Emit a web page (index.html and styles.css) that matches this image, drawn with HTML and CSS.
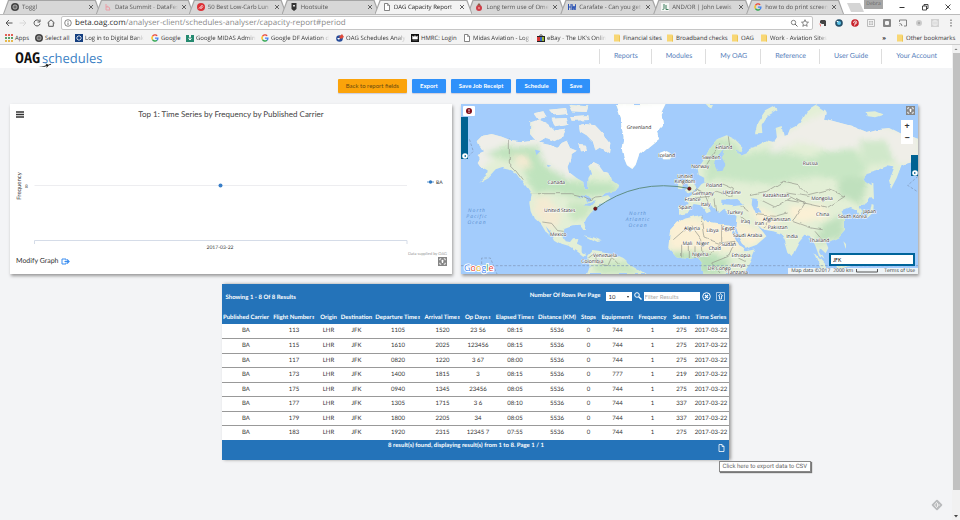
FILE: index.html
```html
<!DOCTYPE html>
<html lang="en">
<head>
<meta charset="utf-8">
<title>OAG Capacity Report</title>
<link rel="stylesheet" href="styles.css">
</head>
<body>
<svg class="defs" width="0" height="0" aria-hidden="true">
  <symbol id="file" viewBox="0 0 8 8"><path d="M1.5.5h3.2l1.8 1.8v5.2h-5z" fill="#fff" stroke="#666" stroke-width=".8"/><path d="M4.5.5v2h2" fill="none" stroke="#666" stroke-width=".6"/></symbol>
  <symbol id="folder" viewBox="0 0 8 8"><path d="M1 .5h5.5v1H7v6H1z" fill="#f8d775"/><path d="M6 1.5h1v6H6z" fill="#ecc554"/></symbol>
  <symbol id="oag" viewBox="0 0 8 8"><circle cx="4" cy="4" r="4" fill="#444"/><circle cx="4" cy="4" r="2" fill="none" stroke="#ccc" stroke-width=".8"/><path d="M4 2v4M2.6 4h2.8" stroke="#999" stroke-width=".5"/></symbol>
  <symbol id="google" viewBox="0 0 8 8"><g fill="none" stroke-width="1.3"><path d="M1.5 2.4A3 3 0 0 1 6.2 1.8" stroke="#ea4335"/><path d="M1.5 2.4a3 3 0 0 0 0 3.2" stroke="#fbbc05"/><path d="M1.5 5.6a3 3 0 0 0 4.5.7" stroke="#34a853"/><path d="M4 4.2h2.9a3 3 0 0 1-.9 2.1" stroke="#4285f4"/></g></symbol>
  <symbol id="close" viewBox="0 0 6 6"><path d="M1 1l4 4M5 1L1 5" stroke="#555" stroke-width=".9"/></symbol>
  <symbol id="expand" viewBox="0 0 10 10"><path d="M2 3.6V2h1.6M6.4 2H8v1.6M8 6.4V8H6.4M3.6 8H2V6.4" fill="none" stroke="currentColor"/><path d="M5 2.8l1.8 2H5.7v1.8H4.3V4.800H3.2z" fill="currentColor"/></symbol>
</svg>

<div class="tabs">
  <div class="tab"><svg class="ico"><use href="#oag"/></svg><span>Toggl</span><button aria-label="Close tab"><svg><use href="#close"/></svg></button></div>
  <div class="tab"><svg class="ico" viewBox="0 0 8 8"><path d="M2 1v3l2-1M2 4v3h4L5 4z" fill="none" stroke="#e9a0a8"/></svg><span>Data Summit - DataFes</span><button aria-label="Close tab"><svg><use href="#close"/></svg></button></div>
  <div class="tab"><svg class="ico" viewBox="0 0 8 8"><circle cx="4" cy="4" r="4" fill="#dc3237"/><path d="M2 5.5L5.5 2M3.5 6L6 3.5" stroke="#fff"/></svg><span>50 Best Low-Carb Lun</span><button aria-label="Close tab"><svg><use href="#close"/></svg></button></div>
  <div class="tab"><svg class="ico" viewBox="0 0 8 8"><path d="M1.5 0h5v6L4 8 1.500 6z" fill="#333"/><path d="M3 2h2v1.500H3z" fill="#ddd"/></svg><span>Hootsuite</span><button aria-label="Close tab"><svg><use href="#close"/></svg></button></div>
  <div class="tab active"><svg class="ico"><use href="#file"/></svg><span>OAG Capacity Report</span><button aria-label="Close tab"><svg><use href="#close"/></svg></button></div>
  <div class="tab"><svg class="ico" viewBox="0 0 8 8"><circle cx="4" cy="5" r="3" fill="#cf3d48"/><path d="M2 2.500h4L4 0z" fill="#8b5a45"/><path d="M3 4h2v2H3z" fill="#e98080"/></svg><span>Long term use of Ome</span><button aria-label="Close tab"><svg><use href="#close"/></svg></button></div>
  <div class="tab"><svg class="ico" viewBox="0 0 8 8"><path d="M.5 1v6M3 1v6M.5 4H3M4 1l.8 6L6 3l1 4 .8-6" fill="none" stroke="#2a52b4"/></svg><span>Carafate - Can you get</span><button aria-label="Close tab"><svg><use href="#close"/></svg></button></div>
  <div class="tab"><svg class="ico" viewBox="0 0 8 8"><path d="M0 0h8v8H0z" fill="#f4f6f4"/><path d="M3 1v4.500q0 1-1.500 1M5 2v4.500h2.500" fill="none" stroke="#3d7c5c"/></svg><span>AND/OR | John Lewis</span><button aria-label="Close tab"><svg><use href="#close"/></svg></button></div>
  <div class="tab"><svg class="ico"><use href="#google"/></svg><span>how to do print screen</span><button aria-label="Close tab"><svg><use href="#close"/></svg></button></div>
  <button class="newtab" aria-label="New tab"></button>
  <div class="window">
    <span class="user">Debra</span>
    <button aria-label="Minimise"><svg viewBox="0 0 8 8"><path d="M1.500 4.500h5" stroke="#333"/></svg></button>
    <button aria-label="Restore"><svg viewBox="0 0 8 8"><path d="M1.500 3h4v4h-4zM3 3V1.500h4v4H5.500" fill="none" stroke="#333" stroke-width=".9"/></svg></button>
    <button aria-label="Close"><svg viewBox="0 0 8 8"><path d="M1.500 1.500l5 5M6.500 1.500l-5 5" stroke="#333" stroke-width=".9"/></svg></button>
  </div>
</div>

<div class="toolbar">
  <button aria-label="Back"><svg viewBox="0 0 8 8"><path d="M7.500 4H1M4 1L1 4l3 3" fill="none" stroke="#555"/></svg></button>
  <button aria-label="Forward"><svg viewBox="0 0 8 8"><path d="M.5 4H7M4 1l3 3-3 3" fill="none" stroke="#d8d8d8"/></svg></button>
  <button aria-label="Reload"><svg viewBox="0 0 8 8"><path d="M6.500 2.200A3 3 0 1 0 7 4.700M7 .5v2.500H4.500" fill="none" stroke="#555"/></svg></button>
  <button aria-label="Home"><svg viewBox="0 0 8 8"><path d="M.5 4L4 .8 7.500 4M1.700 3.500v3.800h4.600V3.500" fill="none" stroke="#555"/></svg></button>
  <div class="address"><svg class="ico" viewBox="0 0 8 8"><circle cx="4" cy="4" r="3.300" fill="none" stroke="#555" stroke-width=".7"/><path d="M4 3.500V6M4 2v.8" stroke="#555" stroke-width=".8"/></svg>
    <span class="url">beta.oag.com<i>/analyser-client/schedules-analyser/capacity-report#period</i></span>
    <svg class="ico" viewBox="0 0 8 8"><circle cx="3.500" cy="3.500" r="2.200" fill="none" stroke="#666" stroke-width=".8"/><path d="M5 5l2.500 2.500" stroke="#666"/></svg>
    <svg class="ico" viewBox="0 0 8 8"><path d="M4 .7l1 2.300 2.500.2-1.900 1.700.6 2.400L4 6 1.800 7.300l.6-2.400L.5 3.200 3 3z" fill="none" stroke="#555" stroke-width=".7"/></svg>
  </div>
  <div class="exts">
    <svg viewBox="0 0 8 8"><path d="M1 2l1-1h4l1 1v5H5V5H3L1 4z" fill="#444"/><path d="M0 4l2 2v2z" fill="#e44"/></svg>
    <svg viewBox="0 0 8 8"><circle cx="4" cy="4" r="3.800" fill="#24506a"/><circle cx="4" cy="4" r="2" fill="#5cc3e8"/><path d="M1.500 2l2 1" stroke="#fff"/></svg>
    <svg viewBox="0 0 8 8"><circle cx="4" cy="4" r="3.800" fill="#c8232c"/><path d="M3.500 6.500L4.500 3M2.500 4q0-2 1.700-2t1.500 1.500-1.500 1.500" fill="none" stroke="#fff" stroke-width=".8"/></svg>
    <svg viewBox="0 0 8 8"><path d="M.5.5h7v7h-7zM2 2l4 4M6 2L2 6" fill="none" stroke="#bbb"/><circle cx="4" cy="4" r="1.500" fill="#eee" stroke="#aaa" stroke-width=".6"/></svg>
    <svg viewBox="0 0 8 8"><rect width="8" height="8" rx="1" fill="#858585"/><rect x="2" y="2" width="4" height="4" rx="1" fill="#f4f4f4"/></svg>
    <svg viewBox="0 0 8 8"><path d="M.5 3V1h7v6H5M.5 4.500A2.500 2.500 0 0 1 3 7M.5 6.500l.5.5" fill="none" stroke="#777" stroke-width=".9"/></svg>
    <svg viewBox="0 0 8 8"><circle cx="4" cy="4" r="3" fill="#ccc"/><circle cx="4" cy="4" r="1.200" fill="#aaa"/></svg>
    <svg viewBox="0 0 8 8"><rect width="8" height="8" fill="#d2d2d2"/><path d="M2 2h4v4H2zM4 1v6" fill="none" stroke="#eee"/></svg>
    <svg viewBox="0 0 8 8"><path d="M3.500 .5h1v1.500h-1zM3.500 3.200h1v1.500h-1zM3.500 6h1v1.500h-1z" fill="#555"/></svg>
  </div>
</div>

<nav class="bookmarks" aria-label="Bookmarks">
  <a href="#"><svg class="ico" viewBox="0 0 8 8"><g stroke-width="2" stroke-dasharray="2 1"><path d="M0 1h8" stroke="#e06055"/><path d="M0 4h8" stroke="#5aa06a"/><path d="M0 7h8" stroke="#e6b84c"/></g></svg>Apps</a>
  <a href="#"><svg class="ico"><use href="#oag"/></svg>Select all</a>
  <a href="#"><svg class="ico" viewBox="0 0 8 8"><rect width="8" height="8" fill="#153f80"/><path d="M4 1v6M1 4h6M2 2l4 4M6 2L2 6" stroke="#fff" stroke-width=".8"/><circle cx="4" cy="4" r="1.300" fill="#153f80"/></svg><span>Log in to Digital Bank</span></a>
  <a href="#"><svg class="ico"><use href="#google"/></svg>Google</a>
  <a href="#"><svg class="ico" viewBox="0 0 8 8"><path d="M0 1h3v2h2V1h3v7H0z" fill="#258a70"/><path d="M4 2v4M2.500 4.500L4 6l1.500-1.500" fill="none" stroke="#fff"/></svg><span>Google MIDAS Admin</span></a>
  <a href="#"><svg class="ico"><use href="#google"/></svg><span>Google DF Aviation d</span></a>
  <a href="#"><svg class="ico" viewBox="0 0 8 8"><circle cx="3.500" cy="4.500" r="3.300" fill="#284e9b"/><path d="M3 3l3-3 2 3-3 2z" fill="#e04a3a"/><path d="M1 4l2 2 1-2z" fill="#fff"/></svg><span>OAG Schedules Analy</span></a>
  <a href="#"><svg class="ico" viewBox="0 0 8 8"><rect width="8" height="8" fill="#111"/><path d="M1.500 2l1.500 1 1-1.500L5 3l1.500-1v3h-5zM1.500 6h5" fill="#fff" stroke="#fff" stroke-width=".4"/></svg>HMRC: Login</a>
  <a href="#"><svg class="ico"><use href="#file"/></svg><span>Midas Aviation - Log i</span></a>
  <a href="#"><svg class="ico" viewBox="0 0 8 8"><path d="M0 2h8v6H0z" fill="#222"/><path d="M0 3h3v4H0z" fill="#d93636"/><path d="M3 3h2v4H3z" fill="#3366c5"/><path d="M5 3h2v4H5z" fill="#9ab934"/><path d="M2.500 2q1.500-3 3 0" fill="none" stroke="#333"/></svg><span>eBay - The UK's Onlin</span></a>
  <a href="#"><svg class="ico"><use href="#folder"/></svg>Financial sites</a>
  <a href="#"><svg class="ico"><use href="#folder"/></svg>Broadband checks</a>
  <a href="#"><svg class="ico"><use href="#folder"/></svg>OAG</a>
  <a href="#"><svg class="ico"><use href="#folder"/></svg><span>Work - Aviation Sites</span></a>
  <b>»</b>
  <a href="#"><svg class="ico"><use href="#folder"/></svg>Other bookmarks</a>
</nav>

<div class="viewport">
<div class="page">
  <header>
    <a class="logo" href="#"><b>OAG</b><span>schedules</span>
      <svg viewBox="0 0 16 6"><path d="M0 4Q6 5 10 2.500L8.500.8h1.200L12 2l3-1 .5.700-3.200 1.300-2 2.500H9.500l.8-2Q5 5.500 0 4z" fill="#111"/></svg></a>
    <nav aria-label="Main"><a href="#">Reports</a><a href="#">Modules</a><a href="#">My OAG</a><a href="#">Reference</a><a href="#">User Guide</a><a href="#">Your Account</a></nav>
  </header>
  <main>
    <div class="actions">
      <button class="back">Back to report fields</button><button>Export</button><button>Save Job Receipt</button><button>Schedule</button><button>Save</button>
    </div>
    <div class="cards">
      <section class="card chart">
        <div class="chart-head"><button aria-label="Chart menu"><svg viewBox="0 0 8 7"><path d="M0 1h8M0 3.500h8M0 6h8" stroke="#333" stroke-width="1.400"/></svg></button><h2>Top 1: Time Series by Frequency by Published Carrier</h2></div>
        <svg class="plot" viewBox="0 0 442 124">
          <path d="M24.500 61.500H397" stroke="#ededf0"/><path d="M24.500 120v-3.500H397v3.500" fill="none" stroke="#d5dce8"/>
          <circle cx="210.500" cy="61.500" r="2" fill="#3a7fc8"/>
          <text x="11" y="62" transform="rotate(-90 11 62)" text-anchor="middle">Frequency</text>
          <text x="15" y="64" class="tiny">8</text>
          <text x="210" y="125" text-anchor="middle" class="tiny">2017-03-22</text>
          <path d="M417 58h7" stroke="#5f97cf"/><circle cx="420.500" cy="58" r="1.700" fill="#2f78c0"/>
          <text x="426" y="60" class="tiny">BA</text>
        </svg>
        <div class="chart-foot"><a href="#">Modify Graph <svg viewBox="0 0 9 7"><path d="M5 1H1v5h4M5 1v1.500M5 6V4.500" fill="none" stroke="#3a8df0"/><path d="M3.500 3.500h4M6 1.500l2 2-2 2" fill="none" stroke="#3a8df0" stroke-width="1.200"/></svg></a>
          <div class="credit"><small>Data supplied by OAG</small><button class="expand" aria-label="Expand chart"><svg><use href="#expand"/></svg></button></div></div>
      </section>
      <section class="card map">
        <svg class="world" viewBox="18 18 1371 510" preserveAspectRatio="xMidYMid slice" role="img" aria-label="Route map">
          <defs>
            <clipPath id="land"><use href="#ground"/></clipPath>
            <filter id="soft" x="-20%" y="-20%" width="140%" height="140%"><feGaussianBlur stdDeviation="9"/></filter>
            <filter id="rough" x="0" y="0" width="100%" height="100%"><feTurbulence type="fractalNoise" baseFrequency=".025" numOctaves="3" seed="4"/><feDisplacementMap in="SourceGraphic" scale="12" xChannelSelector="R" yChannelSelector="G"/></filter>
            <path id="ground" d="M65 130L80 115 110 108 140 116 163 125 200 130 235 125 260 135 290 142 310 150 320 135 335 128 345 150 365 158 350 168 348 185 340 205 345 225 365 240 385 252 390 272 400 270 400 240 408 228 400 205 415 192 432 200 445 218 460 225 468 245 490 262 485 278 455 285 436 298 462 292 470 300 450 314 432 318 418 334 405 347 395 360 388 375 393 396 385 396 376 383 350 385 328 393 325 412 332 430 345 432 354 421 370 420 366 437 380 444 380 460 394 468 388 474 366 457 345 445 320 437 300 425 290 405 272 384 284 412 276 408 258 378 240 362 230 340 226 315 230 290 220 274 208 258 195 240 185 225 165 212 142 207 122 214 100 238 70 254 94 232 98 220 78 210 68 195 78 180 68 168 88 160 74 150Z
              M226 70L250 64 278 78 300 100 330 95 320 120 300 130 275 120 250 136 240 125 225 108Z M240 45L265 40 275 58 252 62Z M285 35L330 30 335 48 300 52Z M340 20L400 25 395 42 350 40Z M290 62L335 60 340 80 300 88Z M345 55L400 52 402 66 350 68Z M372 82L390 78 420 82 445 108 466 135 462 166 440 150 425 160 418 135 395 112 375 100Z M370 138L392 140 396 158 375 160Z
              M480 18L495 60 500 90 506 120 500 150 506 178 516 202 532 213 542 200 552 170 578 148 612 120 606 100 624 80 620 50 636 18Z
              M614 168L635 160 656 170 648 184 625 184Z M690 238L705 232 712 250 722 275 700 284 690 278 700 262Z M670 256L684 254 682 274 668 272Z
              M396 474L412 456 440 460 470 466 502 480 520 496 545 510 572 528H396L404 508Z M385 412L412 418 440 430 425 432 405 422Z
              M645 400L668 374 690 362 735 350 757 372 790 376 830 382 840 400 855 440 872 460 902 454 885 492 862 528H745L740 490 730 478 700 484 664 478 640 450Z
              M748 242L732 234 728 212 744 190 766 148 786 124 815 112 840 124 862 146 856 160 838 154 858 170 878 162 888 150 910 144 935 130 955 135 966 118 962 90 980 84 986 112 998 108 1005 90 1035 75 1055 40 1085 22 1115 42 1110 62 1145 72 1190 84 1235 102 1265 94 1305 90 1345 110 1389 125V180L1365 194 1340 200 1325 240 1308 273 1302 250 1318 208 1295 205 1265 217 1235 225 1222 246 1250 265 1252 292 1235 312 1210 325 1220 345 1213 358 1202 338 1184 330 1160 340 1170 368 1170 395 1150 418 1126 430 1111 428 1120 450 1112 466 1095 450 1092 462 1106 485 1092 474 1080 440 1064 414 1048 410 1032 430 1020 452 1010 474 1000 464 990 430 980 408 955 400 928 395 908 378 920 397 934 415 905 440 872 452 855 420 842 385 845 350 820 348 805 335 792 345 768 318 758 326 768 340 755 346 738 322 716 318 700 345 672 350 672 326 698 322 692 302 718 284 736 262 748 255Z
              M900 106L908 72 930 40 960 24 968 34 938 52 920 80 922 105Z M1232 42L1260 40 1285 50 1260 58 1235 54Z M1238 352L1246 340 1250 318 1256 320 1255 342 1240 358 1225 362Z M1250 256L1255 258 1257 304 1250 300Z M1165 430L1175 440 1172 452Z M1075 462L1110 500 1120 528H1105Z M1145 490L1180 475 1185 505 1150 515Z M755 18L774 18 768 30Z"/>
          </defs>
          <rect x="0" width="1410" height="540" fill="#a3ccfc"/>
          <g filter="url(#rough)">
            <use href="#ground" fill="#e3efd6"/>
            <g clip-path="url(#land)"><g filter="url(#soft)">
              <path d="M60 100H160L260 125 380 70 480 90 470 230 400 200 340 250 260 190 150 130 110 190 60 230ZM220 20H460V160H230Z" fill="#efeee9"/>
              <path d="M475 10H650V220H475Z" fill="#fff"/>
              <path d="M90 165L160 145 250 145 270 205 350 250 480 255 490 285 380 300 280 280 240 290 200 200Z" fill="#bfe3bd"/>
              <path d="M240 300L280 295 320 360 290 400 240 350ZM165 170L220 175 230 210 190 205Z" fill="#f4ead2"/>
              <path d="M340 310L420 315 395 360 350 370ZM410 490L520 490 560 528H420Z" fill="#c9e6c1"/>
              <path d="M750 120L830 125 870 170 960 150 1060 180 1180 130 1240 210 1190 250 1080 235 940 260 780 240 750 260Z" fill="#c8e6c4"/>
              <path d="M950 120L1110 40 1389 110V200L1270 190 1200 150 1120 160 1040 130 950 170Z" fill="#efeee8"/>
              <path d="M1150 245L1240 230 1220 320 1150 290ZM1100 380L1170 350 1165 415 1080 440Z" fill="#bfe0bd"/>
              <path d="M640 355L850 370 870 460 640 455ZM850 370L940 410 880 450ZM870 320L950 345 980 390 920 390ZM1000 325L1100 320 1125 355 1040 375 1000 360Z" fill="#fbf0d5"/>
              <path d="M650 462L760 465 830 490 800 528H730V485L650 490Z" fill="#b9dfb8"/>
              <path d="M1210 130l80-5 30 70-90 5z" fill="#d0e8ca"/>
            </g></g>
            <g fill="#a3ccfc"><path d="M790 220l-10-22 8-24 18-22-5 28 10 18-8 20zM802 305l45-2 20 18-35 4-30-4zM892 298l18 2-2 25 12 22-18-2-12-28zM365 292l28 2 14 12-10 8-6-14-15-2zM386 322l24-10 10-2-14 14zM240 155l16 4-12 12zM275 200l14 3-10 4zM835 395l24 48 14 12-20-10-22-40z"/></g>
            <g fill="none" stroke="#92948a" stroke-width="2"><path d="M163 122V195L182 215 205 245M230 287H350L372 292 405 308 418 300 440 298M262 372L290 376 308 398 326 400M400 480l20-15 5 30 35 5 10-22 20 20M885 290l50-10 50-30 45 10 30 30 60-15 50 20-55 35-70-15-35-18-50 30-40-20M990 305l60 10-35 55 55 20 30 5M900 350l60 5 35-10M860 360l25 20M710 385l30 40 5 50M740 350l10 70 40 15 50-5M800 375v60l-40 40M840 430l-20 45-50 20 25 30M655 425l40-35M820 115l5 40M755 200l40-65M760 265l40-10 35 15-5 25-45-15-25 20M720 275l30 15 10 25M720 300l45-5M780 300l5 40M860 325l20 15M850 480l20 10M680 440v38M700 440v40M720 445v35M1060 295l-65-10M1080 400l25 30M925 390l20-30 50 5"/></g>
          </g>
          <g fill="none" stroke="#7d94b5" stroke-width="2" stroke-dasharray="8 5"><path d="M18 503H1389M80 498V480H106L126 528M30 185L55 160 42 120M1389 235L1358 262 1389 282"/></g>
          <path d="M421 332Q545 240 702 271" fill="none" stroke="#5f8e83" stroke-width="3"/>
          <g fill="#7b1018" stroke="#3b1a1a" stroke-width="2"><circle cx="421" cy="332" r="5"/><circle cx="703" cy="272" r="5"/></g>
          <g class="places"><text x="552" y="94">Greenland</text><text x="635" y="178">Iceland</text><text x="304" y="258">Canada</text><text x="314" y="343">United States</text><text x="310" y="415">Mexico</text><text x="450" y="477">Venezuela</text><text x="412" y="495">Colombia</text><text x="690" y="239">United</text><text x="690" y="256">Kingdom</text><text x="713" y="308">France</text><text x="691" y="333">Spain</text><text x="711" y="397">Algeria</text><text x="697" y="440">Mali</text><text x="806" y="153">Finland</text><text x="769" y="182">Sweden</text><text x="736" y="211">Norway</text><text x="777" y="268">Poland</text><text x="744" y="290">Germany</text><text x="830" y="289">Ukraine</text><text x="752" y="325">Italy</text><text x="840" y="347">Turkey</text><text x="871" y="374">Iraq</text><text x="913" y="381">Iran</text><text x="965" y="369">Afghanistan</text><text x="968" y="393">Pakistan</text><text x="963" y="297">Kazakhstan</text><text x="1066" y="202">Russia</text><text x="1101" y="306">Mongolia</text><text x="1103" y="354">China</text><text x="1192" y="360">South Korea</text><text x="1244" y="346">Japan</text><text x="1011" y="419">India</text><text x="1093" y="431">Thailand</text><text x="772" y="401">Libya</text><text x="820" y="395">Egypt</text><text x="878" y="416">Saudi Arabia</text><text x="743" y="440">Niger</text><text x="779" y="455">Chad</text><text x="821" y="443">Sudan</text><text x="736" y="473">Nigeria</text><text x="858" y="476">Ethiopia</text><text x="793" y="516">DR Congo</text><text x="850" y="508">Kenya</text><text x="848" y="528">Tanzania</text></g>
          <g class="oceans"><text x="66" y="342">North</text><text x="66" y="361">Pacific</text><text x="66" y="379">Ocean</text><text x="549" y="350">North</text><text x="549" y="369">Atlantic</text><text x="549" y="387">Ocean</text></g>
        </svg>
        <div class="alert"><svg viewBox="0 0 6 6"><circle cx="3" cy="3" r="3" fill="#810c18"/><path d="M3 1.200v2.200M3 4v.8" stroke="#fff"/></svg></div>
        <button class="drawer left" aria-label="Open left panel"><svg viewBox="0 0 6 6"><circle cx="3" cy="3" r="2.800" fill="#fff"/><path d="M2 3h2M3 2l1 1-1 1" fill="none" stroke="#006292" stroke-width=".7"/></svg></button>
        <button class="drawer right" aria-label="Open right panel"><svg viewBox="0 0 6 6"><circle cx="3" cy="3" r="2.800" fill="#fff"/><path d="M4 3H2M3 2L2 3l1 1" fill="none" stroke="#006292" stroke-width=".7"/></svg></button>
        <button class="expand full" aria-label="Expand map"><svg><use href="#expand"/></svg></button>
        <div class="zoom"><button aria-label="Zoom in">+</button><button aria-label="Zoom out">−</button></div>
        <div class="google"><i>G</i><i>o</i><i>o</i><i>g</i><i>l</i><i>e</i></div>
        <input class="find" aria-label="Find airport" value="JFK">
        <div class="legal"><span>Map data ©2017</span><span>2000 km</span><svg viewBox="0 0 22 4"><path d="M.5 0v3h21V0" fill="none" stroke="#555"/></svg><a href="#">Terms of Use</a></div>
      </section>
    </div>
    <section class="results">
      <div class="bar">
        <b>Showing 1 - 8 Of 8 Results</b>
        <div class="tools"><label for="rows">Number Of Rows Per Page</label>
          <span class="pick"><select id="rows"><option>10</option></select></span>
          <svg viewBox="0 0 8 8"><circle cx="3" cy="3" r="2.300" fill="none" stroke="#fff"/><path d="M4.700 4.700L7.500 7.500" stroke="#fff" stroke-width="1.400"/></svg>
          <input aria-label="Filter results" placeholder="Filter Results">
          <button aria-label="Clear filter"><svg viewBox="0 0 9 9"><circle cx="4.500" cy="4.500" r="3.800" fill="none" stroke="#fff"/><path d="M3 3l3 3M6 3L3 6" stroke="#fff" stroke-width="1.200"/></svg></button>
          <button class="grow" aria-label="Expand table"><svg viewBox="0 0 9 9"><path d="M.5.5h8v8h-8z" fill="none" stroke="#c8dcf0" stroke-width=".8"/><path d="M4.500 1.500l2 2.500h-1v3h-2V4h-1z" fill="none" stroke="#fff" stroke-width=".8"/></svg></button>
        </div>
      </div>
      <table>
        <colgroup><col class="w49"><col class="w47"><col class="w22"><col class="w34"><col class="w49"><col class="w40"><col class="w31"><col class="w43"><col class="w41"><col class="w22"><col class="w36"><col class="w34"><col class="w24"><col class="w35"></colgroup>
        <thead><tr><th>Published Carrier</th><th class="sort">Flight Number</th><th>Origin</th><th>Destination</th><th class="sort">Departure Time</th><th class="sort">Arrival Time</th><th class="sort">Op Days</th><th class="sort">Elapsed Time</th><th>Distance (KM)</th><th>Stops</th><th class="sort">Equipment</th><th>Frequency</th><th class="sort">Seats</th><th>Time Series</th></tr></thead>
        <tbody>
          <tr><td>BA<td>113<td>LHR<td>JFK<td>1105<td>1520<td>23 56<td>08:15<td>5536<td>0<td>744<td>1<td>275<td>2017-03-22</tr>
          <tr><td>BA<td>115<td>LHR<td>JFK<td>1610<td>2025<td>123456<td>08:15<td>5536<td>0<td>744<td>1<td>275<td>2017-03-22</tr>
          <tr><td>BA<td>117<td>LHR<td>JFK<td>0820<td>1220<td>3 67<td>08:00<td>5536<td>0<td>744<td>1<td>275<td>2017-03-22</tr>
          <tr><td>BA<td>173<td>LHR<td>JFK<td>1400<td>1815<td>3<td>08:15<td>5536<td>0<td>777<td>1<td>219<td>2017-03-22</tr>
          <tr><td>BA<td>175<td>LHR<td>JFK<td>0940<td>1345<td>23456<td>08:05<td>5536<td>0<td>744<td>1<td>275<td>2017-03-22</tr>
          <tr><td>BA<td>177<td>LHR<td>JFK<td>1305<td>1715<td>3 6<td>08:10<td>5536<td>0<td>744<td>1<td>337<td>2017-03-22</tr>
          <tr><td>BA<td>179<td>LHR<td>JFK<td>1800<td>2205<td>34<td>08:05<td>5536<td>0<td>744<td>1<td>337<td>2017-03-22</tr>
          <tr><td>BA<td>183<td>LHR<td>JFK<td>1920<td>2315<td>12345 7<td>07:55<td>5536<td>0<td>744<td>1<td>275<td>2017-03-22</tr>
        </tbody>
      </table>
      <div class="summary"><b>8 result(s) found, displaying result(s) from 1 to 8. Page 1 / 1</b>
        <button aria-label="Export to CSV"><svg viewBox="0 0 7 8"><path d="M1 .5h3l2 2v5H1zM4 .5v2h2" fill="none" stroke="#fff" stroke-width=".8"/></svg></button>
        <div class="tip" role="tooltip">Click here to export data to CSV</div></div>
    </section>
  </main>
  <svg class="badge" viewBox="0 0 12 12"><rect x="2" y="2" width="8" height="8" rx="1" transform="rotate(45 6 6)" fill="#b9bbbd"/><path d="M6 3L3.500 6 6 9M6.500 4v4M8 5v2" fill="none" stroke="#eee"/></svg>
</div>
<div class="scroll"><svg viewBox="0 0 8 8"><path d="M2.500 5L4 3.500 5.500 5z" fill="#777"/></svg><div></div><svg class="down" viewBox="0 0 8 8"><path d="M2 3h4L4 5.500z" fill="#444"/></svg></div>
</div>
</body>
</html>
```
FILE: styles.css
```css
* { box-sizing: border-box; }
body { margin: 0; min-height: 100vh; display: flex; flex-direction: column; background: #f3f4f6; font: 6px/10px "Open Sans", sans-serif; color: #333; text-rendering: geometricPrecision; }
button { border: 0; padding: 0; background: none; font: inherit; color: inherit; display: flex; align-items: center; justify-content: center; }
a { color: inherit; text-decoration: none; }
svg { display: block; flex: none; }
.defs { position: absolute; }
.ico { width: 8px; height: 8px; }

.tabs { display: flex; height: 15px; padding-left: 3px; background: #fff; border-bottom: 1px solid #bbb; }
.tab { flex: 0 1 98px; min-width: 0; margin-right: -5px; display: flex; align-items: center; gap: 3px; padding: 0 7px 0 8px; background: #a5a5a5; clip-path: polygon(5px 0, calc(100% - 5px) 0, 100% 100%, 0 100%); position: relative; color: #555; }
.tab::before { content: ""; position: absolute; inset: 0; background: #d7d7d7; clip-path: polygon(6px 1px, calc(100% - 6px) 1px, calc(100% - 1px) 100%, 1px 100%); }
.tab.active::before { background: #f3f3f3; }
.tab.active { z-index: 1; color: #222; }
.tab > * { position: relative; }
.tab span { flex: 1; overflow: hidden; white-space: nowrap; mask-image: linear-gradient(to right, #000 88%, transparent); }
.tab button svg { width: 6px; height: 6px; }
.newtab { flex: none; width: 17px; height: 9px; margin: 3px 0 0 8px; background: #d5d5d5; clip-path: polygon(0 0, 13px 0, 100% 100%, 4px 100%); }
.window { margin-left: auto; display: flex; align-items: center; gap: 15px; padding-right: 8px; }
.user { align-self: flex-start; width: 19px; height: 9px; font-size: 5px; line-height: 8px; text-align: center; background: #a6a6a6; color: #666; }
.window svg { width: 8px; height: 8px; }

.toolbar { display: flex; align-items: center; height: 16px; padding: 0 5px 0 5px; background: #f3f3f3; gap: 6px; }
.toolbar button svg { width: 8px; height: 8px; }
.address { flex: 1; display: flex; align-items: center; gap: 3px; height: 14px; padding: 0 3px 0 2px; background: #fff; border: 1px solid #c6c6c6; border-radius: 2px; }
.url { flex: 1; font-size: 8px; color: #333; white-space: nowrap; }
.url i { font-style: normal; color: #8a8a8a; }
.exts { display: flex; gap: 8px; }
.exts svg { width: 8px; height: 8px; }

.bookmarks { display: grid; grid-template-columns: 30px 40px 76px 35px 75px 75px 75px 52px 74px 76px 53px 65px 29px 76px 1fr 64px; align-items: center; height: 14px; padding-left: 5px; background: #f3f3f3; border-bottom: 1px solid #ccc; white-space: nowrap; }
.bookmarks a { display: flex; align-items: center; gap: 2px; min-width: 0; padding-right: 2px; }
.bookmarks span { overflow: hidden; mask-image: linear-gradient(to right, #000 85%, transparent); }
.bookmarks b { justify-self: end; padding-right: 10px; }

.viewport { flex: 1; display: flex; }
.page { flex: 1; min-width: 0; position: relative; }
.scroll { width: 8px; display: flex; flex-direction: column; background: #f1f1f1; }
.scroll div { flex: 1; margin: 0 0 22px 1px; background: #c1c1c1; }
.scroll svg { height: 8px; }

header { display: flex; justify-content: space-between; align-items: center; height: 23px; background: #fff; }
.logo { position: relative; display: flex; align-items: center; gap: 2px; padding: 3px 0 0 15px; font: 13px/20px "Open Sans", sans-serif; color: #3b7fc4; }
.logo b { font: 700 15px/20px "Liberation Sans Narrow", "Open Sans Condensed", sans-serif; color: #111; }
.logo svg { position: absolute; left: 38px; bottom: 0; width: 14px; height: 5px; }
header nav { display: flex; }
header nav a { padding: 0 13px 0 14px; border-left: 1px solid #ddd; font: 7px/15px Lato, sans-serif; color: #5780bb; }
header nav a:last-child { padding-right: 15px; }

main { padding: 11px 34px 0 10px; font-family: Lato, sans-serif; }
.actions { display: flex; justify-content: center; gap: 5px; }
.actions button { height: 14px; padding: 0 8px; border-radius: 1px; background: #2f91fa; color: #fff; font-weight: 700; box-shadow: 0 1px 1px #ccd; }
.actions .back { background: #fba30a; color: #6b4a10; font-weight: 400; }
.cards { display: grid; grid-template-columns: 442fr 457fr; gap: 9px; margin-top: 11px; }
.card { position: relative; min-width: 0; height: 170px; background: #fff; box-shadow: 1px 2px 3px #999; }
.chart { display: flex; flex-direction: column; }
.chart-head { display: flex; align-items: center; height: 20px; padding: 0 14px 0 6px; }
.chart-head svg { width: 8px; height: 7px; }
h2 { flex: 1; margin: 0; text-align: center; font: 400 8px/12px Lato, sans-serif; color: #444; }
.plot { width: 100%; flex: 1; min-height: 0; overflow: visible; }
.plot text { font: 6px Lato, sans-serif; fill: #333; }
.plot .tiny { font-size: 5px; }
.chart-foot { display: flex; justify-content: space-between; align-items: flex-end; padding: 0 5px 8px 6px; height: 26px; font-size: 7px; }
.chart-foot a { display: flex; align-items: center; gap: 2px; }
.chart-foot a svg { width: 9px; height: 7px; }
.credit { display: flex; flex-direction: column; align-items: flex-end; }
.credit small { font-size: 4px; line-height: 6px; color: #999; }
.expand { width: 9px; height: 9px; background: #858585; color: #fff; }
.expand svg { width: 9px; height: 9px; }

.world { width: 100%; height: 100%; }
.places text { font: 15px "Open Sans", sans-serif; text-anchor: middle; fill: #222; stroke: #fff; stroke-width: 3px; paint-order: stroke; }
.oceans text { font: italic 15px "Open Sans", sans-serif; letter-spacing: 3px; text-anchor: middle; fill: #5b8fd0; }
.alert { position: absolute; top: 2px; left: 2px; padding: 2px 3px; background: #fff; border-radius: 1px; }
.alert svg { width: 6px; height: 6px; }
.drawer { position: absolute; width: 7px; background: #006292; align-items: flex-end; }
.drawer svg { width: 6px; height: 6px; }
.drawer.left { left: 0; top: 13px; height: 42px; }
.drawer.right { right: 0; top: 51px; height: 21px; }
.full { position: absolute; top: 2px; right: 3px; }
.zoom { position: absolute; top: 16px; right: 5px; width: 12px; background: #fff; font: 700 9px/12px "Open Sans", sans-serif; }
.zoom button { width: 12px; height: 12px; }
.google { position: absolute; left: 3px; bottom: 1px; font: 9px/11px "Open Sans", sans-serif; -webkit-text-stroke: 2px #fff; paint-order: stroke; }
.google i { font-style: normal; color: #4285f4; }
.google i:nth-child(2), .google i:nth-child(6) { color: #ea4335; }
.google i:nth-child(3) { color: #e8ae16; }
.google i:nth-child(5) { color: #34a853; }
.find { position: absolute; right: 3px; bottom: 8px; width: 86px; height: 13px; padding: 0 3px; border: 1px solid #00649a; outline: 1px solid #00649a; outline-offset: -2px; background: #fff; font: 5px Lato, sans-serif; }
.legal { position: absolute; right: 0; bottom: 0; display: flex; align-items: center; gap: 3px; height: 6px; padding: 0 3px; background: #eef3f6; font: 5px/6px "Open Sans", sans-serif; white-space: nowrap; }
.legal svg { width: 22px; height: 4px; }
.legal a { margin-left: 3px; }

.results { position: relative; width: 507px; max-width: 100%; margin: 10px auto 0; left: 11px; background: #2473b9; color: #fff; box-shadow: 2px 0 3px #999; line-height: 8px; }
.bar { display: flex; justify-content: space-between; height: 27px; padding: 8px 4px 0; }
.bar > b { padding-top: 2px; }
.tools { display: flex; align-items: flex-start; gap: 2px; }
.tools label { font-weight: 700; padding-right: 3px; }
.tools > svg { width: 8px; height: 8px; }
.tools button svg { width: 9px; height: 9px; }
.grow { margin-left: 3px; }
.pick { position: relative; background: #fff; }
.pick::after { content: ""; position: absolute; right: 3px; top: 4px; border: 1px solid transparent; border-top: 2px solid #222; }
select { display: block; width: 26px; height: 9px; padding: 0 3px; border: 0; appearance: none; background: transparent; font: 6px/9px Lato, sans-serif; color: #333; }
.tools input { width: 56px; height: 9px; padding: 0 1px; border: 0; font: 6px Lato, sans-serif; background: #fff; }
.tools input::placeholder { color: #aaa; }
table { width: 100%; table-layout: fixed; border-collapse: collapse; text-align: center; white-space: nowrap; }
th, td { padding: 1px 0 0; }
th { height: 13px; }
.sort::after { content: "⇕"; font-size: 4px; }
td { height: 14px; background: #fff; color: #333; border-bottom: 1px solid #999; }
tr:nth-child(even) td { height: 15px; }
tbody tr:last-child td { border: 0; }
.w22 { width: 22px; } .w24 { width: 24px; } .w31 { width: 31px; } .w34 { width: 34px; } .w35 { width: 35px; } .w36 { width: 36px; } .w40 { width: 40px; } .w41 { width: 41px; } .w43 { width: 43px; } .w47 { width: 47px; } .w49 { width: 49px; }
.summary { position: relative; height: 20px; padding-top: 2px; text-align: center; }
.summary b { padding-right: 18px; }
.summary button { position: absolute; right: 4px; top: 4px; }
.summary button svg { width: 7px; height: 8px; }
.tip { position: absolute; left: calc(100% - 10px); top: 21px; padding: 0 3px; background: #fff; border: 1px solid #888; box-shadow: 1px 1px 1px #777; color: #666; font: 6px/9px Roboto, sans-serif; white-space: nowrap; }
.badge { position: absolute; right: 9px; bottom: 9px; width: 12px; height: 12px; }
```
